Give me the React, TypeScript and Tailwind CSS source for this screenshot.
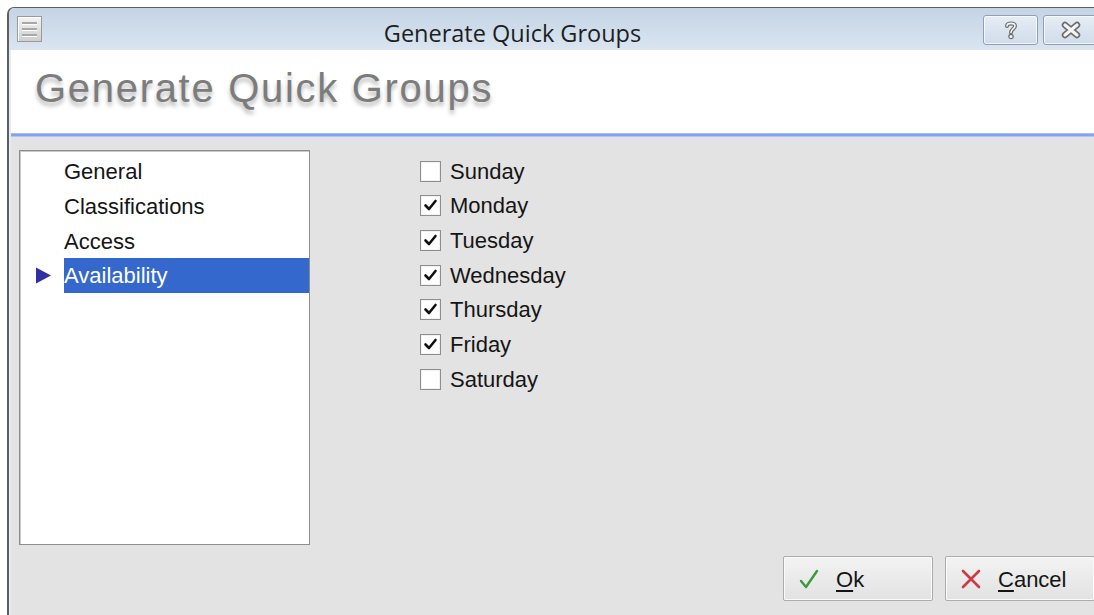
import React from "react";

const sans = { fontFamily: '"Liberation Sans", Arial, sans-serif' };
const ui = { fontFamily: '"Open Sans", "Noto Sans", sans-serif' };

const sections = ["General", "Classifications", "Access", "Availability"];
const days: [string, boolean][] = [
  ["Sunday", false],
  ["Monday", true],
  ["Tuesday", true],
  ["Wednesday", true],
  ["Thursday", true],
  ["Friday", true],
  ["Saturday", false],
];

function MenuGlyph() {
  return (
    <div className="w-[25px] h-[26px] border border-[#9a9a9a] bg-gradient-to-b from-[#f4f4f4] to-[#cfcfcf] flex flex-col justify-center gap-[3px] px-[4px] shadow-[inset_1px_1px_0_#ffffff]">
      <div className="h-[3px] bg-[#a8a8a8] border-b border-white" />
      <div className="h-[3px] bg-[#a8a8a8] border-b border-white" />
      <div className="h-[3px] bg-[#a8a8a8] border-b border-white" />
    </div>
  );
}

function CaptionButton({ children }: { children: React.ReactNode }) {
  return (
    <div className="w-[55px] h-[30px] rounded-[3px] border border-[#8fa0b6] bg-gradient-to-b from-[#e6edf5] to-[#d0dcea] shadow-[inset_0_0_0_1px_rgba(255,255,255,0.7)] flex items-center justify-center">
      {children}
    </div>
  );
}

function CheckBox({ checked }: { checked: boolean }) {
  return (
    <div className="w-[21px] h-[21px] border border-[#8e8e8e] bg-white shadow-[inset_0_0_0_1px_#f2f2f2] flex items-center justify-center">
      {checked && (
        <svg width="15" height="15" viewBox="0 0 15 15">
          <path d="M2.5 7.5 L6 11 L12.5 3" fill="none" stroke="#111" strokeWidth="2.6" strokeLinecap="round" strokeLinejoin="round" />
        </svg>
      )}
    </div>
  );
}

function PushButton({ icon, hotkey, rest }: { icon: React.ReactNode; hotkey: string; rest: string }) {
  return (
    <div className="w-[150px] h-[45px] rounded-[2px] border border-[#acacac] bg-gradient-to-b from-[#f3f3f3] to-[#e2e2e2] shadow-[inset_0_0_0_1px_#fafafa] flex items-center pl-[14px]">
      <div className="w-[22px] h-[24px] flex items-center justify-center">{icon}</div>
      <span className="ml-[16px] mt-[2px] text-[22px] leading-none text-[#151515]" style={sans}>
        <span className="underline underline-offset-[3px] decoration-[1.5px]">{hotkey}</span>
        {rest}
      </span>
    </div>
  );
}

export default function App() {
  return (
    <div className="w-[1094px] h-[615px] overflow-hidden bg-white pt-[7px] pl-[7px]">
      <div className="w-[1091px] h-[620px] rounded-tl-[7px] border-l-2 border-t border-[#5e5e5e] flex flex-col overflow-hidden">
        {/* caption bar */}
        <div className="h-[42px] shrink-0 bg-gradient-to-b from-[#c4d4e4] to-[#dae5f1] flex items-start pt-[8px] pl-[8px]">
          <MenuGlyph />
          <div className="flex-1 text-center text-[23.5px] leading-[26px] text-[#1e1e1e] pt-[4px]" style={ui}>
            Generate Quick Groups
          </div>
          <div className="flex gap-[5px] -mt-[1px]">
            <CaptionButton>
              <svg width="16" height="20" viewBox="0 0 16 20">
                <path d="M4 6 C4 2.5 12 2.5 12 6 C12 9 8 9 8 12.5" fill="none" stroke="#6c6c6c" strokeWidth="4" strokeLinecap="round" />
                <path d="M4 6 C4 2.5 12 2.5 12 6 C12 9 8 9 8 12.5" fill="none" stroke="#f4f4f4" strokeWidth="1.6" strokeLinecap="round" />
                <circle cx="8" cy="16.5" r="2.2" fill="#f4f4f4" stroke="#6c6c6c" strokeWidth="1.2" />
              </svg>
            </CaptionButton>
            <CaptionButton>
              <svg width="22" height="18" viewBox="0 0 22 18">
                <path d="M5 4 L17 14 M17 4 L5 14" stroke="#6c6c6c" strokeWidth="6.5" strokeLinecap="round" />
                <path d="M5 4 L17 14 M17 4 L5 14" stroke="#f4f4f4" strokeWidth="3.2" strokeLinecap="round" />
              </svg>
            </CaptionButton>
          </div>
        </div>

        <div className="flex-1 flex flex-col border-l-2 border-[#e4ecf6]">
          {/* banner */}
          <div className="h-[83px] shrink-0 bg-white pl-[24px] pt-[18px]">
            <div
              className="text-[40px] leading-none tracking-[1.7px] text-[#7c7c7c] [text-shadow:0_4px_4px_rgba(0,0,0,0.28)]"
              style={sans}
            >
              Generate Quick Groups
            </div>
          </div>
          <div className="h-[4px] shrink-0 bg-gradient-to-b from-[#b9cbf6] via-[#6f92ee] to-[#c6d5f8]" />

          {/* body */}
          <div className="flex-1 bg-[#e3e3e3] pt-[13px] pl-[8px] flex flex-col">
            <div className="flex">
              <div className="w-[291px] h-[395px] border border-[#8d8d8d] shadow-[inset_1px_1px_0_#c9c9c9] bg-white pt-[3px]">
                {sections.map((s) => {
                  const sel = s === "Availability";
                  return (
                    <div key={s} className="h-[34.67px] flex items-stretch">
                      <div className="w-[44px] flex items-center pl-[15px]">
                        {sel && (
                          <svg width="17" height="17" viewBox="0 0 17 17">
                            <path d="M1 0.5 L16 8.5 L1 16.5 Z" fill="#3030a6" />
                          </svg>
                        )}
                      </div>
                      <div
                        className={`flex-1 flex items-center pt-[2px] text-[22px] leading-none ${sel ? "bg-[#3468cc] text-white" : "text-[#151515]"}`}
                        style={sans}
                      >
                        {s}
                      </div>
                    </div>
                  );
                })}
              </div>

              <div className="ml-[110px] pt-[4px]">
                {days.map(([d, c]) => (
                  <div key={d} className="h-[34.67px] flex items-center gap-[9px]">
                    <CheckBox checked={c} />
                    <span className="text-[22px] leading-none text-[#151515] pt-[1px]" style={sans}>
                      {d}
                    </span>
                  </div>
                ))}
              </div>
            </div>

            <div className="mt-[11px] flex justify-end gap-[12px] pr-[3px]">
              <PushButton
                icon={
                  <svg width="20" height="22" viewBox="0 0 20 22">
                    <path d="M2 13 L7 19 L18 3" fill="none" stroke="#3d9a3a" strokeWidth="2.4" strokeLinecap="round" strokeLinejoin="round" />
                  </svg>
                }
                hotkey="O"
                rest="k"
              />
              <PushButton
                icon={
                  <svg width="22" height="22" viewBox="0 0 22 22">
                    <path d="M3 3 L19 19 M19 3 L3 19" stroke="#cc3a45" strokeWidth="2.6" strokeLinecap="round" />
                  </svg>
                }
                hotkey="C"
                rest="ancel"
              />
            </div>
          </div>
        </div>
      </div>
    </div>
  );
}
